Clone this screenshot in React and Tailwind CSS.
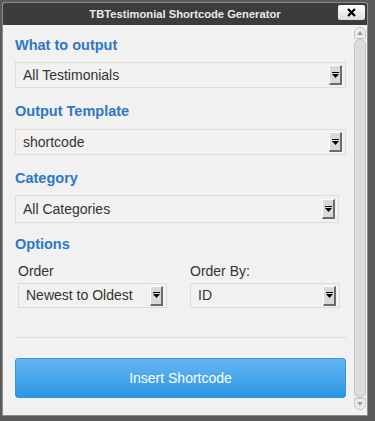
import React from 'react';

function Arrow() {
  return (
    <div className="flex h-[20px] w-[13px] items-center justify-center border-t border-l border-t-white border-l-white border-r-2 border-b-2 border-r-[#6b6b6b] border-b-[#6b6b6b] bg-[#d9d9d9]">
      <svg width="7" height="6" viewBox="0 0 7 6">
        <rect x="0" y="0" width="7" height="1" fill="#000" />
        <path d="M0 2 H7 L3.5 6 Z" fill="#000" />
      </svg>
    </div>
  );
}

function Select({ value, className }) {
  return (
    <div className={`flex items-center justify-between border border-[#dcdcdc] bg-[#f2f1f0] pl-[7px] pr-[3px] text-[#333] ${className}`}>
      <span>{value}</span>
      <Arrow />
    </div>
  );
}

function Label({ children }) {
  return <div className="text-[14.5px] leading-[17px] font-bold text-[#2e77c5]">{children}</div>;
}

export default function App() {
  return (
    <div className="h-[421px] w-[375px] bg-[#5b5b5b] pt-[2px] pl-[2px]" style={{ fontFamily: '"Liberation Sans", Arial, sans-serif' }}>
      <div className="flex h-[414px] w-[366px] flex-col overflow-hidden rounded-t-[3px] border border-[#8c8c8c] bg-[#f1f1f1]">
        <div className="relative flex h-[22px] items-center justify-center bg-[#3c3c3c]">
          <span className="text-[11.2px] font-bold text-[#eaeaea]">TBTestimonial Shortcode Generator</span>
          <div className="absolute right-[2px] top-[2px] flex h-[15px] w-[27px] items-center justify-center rounded-[2px] bg-gradient-to-b from-white to-[#dcdcdc]">
            <svg width="9" height="9" viewBox="0 0 9 9">
              <path d="M1 1 L8 8 M8 1 L1 8" stroke="#000" strokeWidth="2.2" />
            </svg>
          </div>
        </div>
        <div className="flex flex-1">
          <div className="flex-1 pl-[12px] pr-[8px] text-[14px] leading-[17px]">
            <div className="mt-[12px]"><Label>What to output</Label></div>
            <Select value="All Testimonials" className="mt-[8px] h-[26px]" />
            <div className="mt-[15px]"><Label>Output Template</Label></div>
            <Select value="shortcode" className="mt-[9px] h-[26px]" />
            <div className="mt-[15px]"><Label>Category</Label></div>
            <Select value="All Categories" className="mt-[8px] mr-[7px] h-[28px]" />
            <div className="mt-[13px]"><Label>Options</Label></div>
            <div className="mt-[10px] flex pl-[3px]">
              <div className="w-[172px]">
                <div className="text-[#333]">Order</div>
                <Select value="Newest to Oldest" className="mt-[3px] h-[25px] w-[149px]" />
              </div>
              <div>
                <div className="text-[#333]">Order By:</div>
                <Select value="ID" className="mt-[3px] h-[25px] w-[150px]" />
              </div>
            </div>
            <div className="mt-[29px] h-px bg-[#dcdcdc]" />
            <button className="mt-[20px] flex h-[40px] w-full items-center justify-center rounded-[3px] border border-[#3a94dc] bg-gradient-to-b from-[#63b6f1] to-[#2797e6] text-[14px] text-white">
              Insert Shortcode
            </button>
          </div>
          <div className="mt-[2px] mr-[1px] mb-[5px] flex w-[12px] flex-col items-center">
            <div className="flex h-[12px] w-[12px] items-center justify-center rounded-t-full border border-[#c8c6c4] bg-[#eeeceb]">
              <svg width="6" height="4" viewBox="0 0 6 4"><path d="M0 4 L3 0 L6 4 Z" fill="#9a9a9a" /></svg>
            </div>
            <div className="w-[12px] flex-1 rounded-full border border-[#c4c2c0] bg-[#dedcda]" />
            <div className="flex h-[12px] w-[12px] items-center justify-center rounded-b-full border border-[#c8c6c4] bg-[#eeeceb]">
              <svg width="6" height="4" viewBox="0 0 6 4"><path d="M0 0 L3 4 L6 0 Z" fill="#9a9a9a" /></svg>
            </div>
          </div>
        </div>
      </div>
    </div>
  );
}
